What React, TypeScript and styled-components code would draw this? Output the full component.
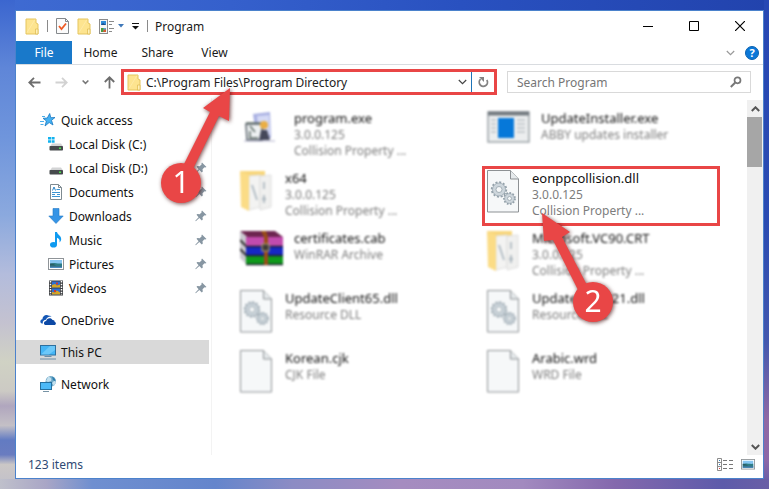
import React from "react";
import styled, { createGlobalStyle, css } from "styled-components";

const RED = "#e94646";

const GlobalStyle = createGlobalStyle`
  * { box-sizing: border-box; }
  body { margin: 0; }
  body, button, input { font-family: "Noto Sans", "Open Sans", sans-serif; font-size: 12px; }
  button { border: 0; padding: 0; background: none; color: inherit; }
  svg { display: block; flex: none; }
`;

const Desktop = styled.div`
  display: flex;
  min-height: 100vh;
  padding: 10px 5px 10px 15px;
  background:
    linear-gradient(90deg, #bfc0cb 0%, #a9a6c6 6%, #6f8fd0 12%, #6485cc 28%, #8c8cc4 38%, #a58cc0 52%, #a28abf 68%, #8468ad 80%, #5d5baa 94%, #6a5fa6 100%) bottom / 100% 10px no-repeat,
    linear-gradient(180deg, #3b66cf 0%, #5f86d8 14%, #6f95dc 28%, #8ba9de 44%, #b3bcdc 56%, #c4c2d0 66%, #d0d2c4 74%, #cccac4 80%, #b0a6be 83%, #c4c0c6 87%, #627bc2 90%, #6a7cc0 93%, #cbc7c6 95%, #c0bfcb 100%) left / 15px 100% no-repeat,
    linear-gradient(180deg, #2748b4 0%, #2a4bb2 45%, #4458ae 70%, #9069a4 86%, #8c68a8 94%, #5f5ba6 100%) right / 5px 100% no-repeat,
    linear-gradient(90deg, #3f6bd2 0%, #3560cc 30%, #2951c0 60%, #2243ad 100%);
`;

const Window = styled.main`
  flex: 1;
  min-width: 0;
  display: flex;
  flex-direction: column;
  background: #fff;
  border: 1px solid #4b82cc;
  color: #1a1a1a;
`;

const TitleBar = styled.header`
  display: flex;
  align-items: center;
  height: 30px;
  padding-left: 9px;
`;

const QuickTools = styled.div`
  display: flex;
  align-items: center;
  gap: 8px;
`;

const Divider = styled.span`
  width: 1px;
  height: 12px;
  background: #8a8a8a;
`;

const ToolButton = styled.button`
  display: flex;
  align-items: center;
  gap: 3px;
`;

const Title = styled.h1`
  flex: 1;
  margin: 0 0 0 7px;
  font-size: 12px;
  font-weight: 400;
`;

const CaptionButton = styled.button`
  display: flex;
  align-items: center;
  justify-content: center;
  width: 46px;
  height: 28px;
`;

const Ribbon = styled.nav`
  display: flex;
  align-items: stretch;
  height: 24px;
  border-bottom: 1px solid #d9dce0;
`;

const Tab = styled.button<{ $active?: boolean }>`
  width: ${(p) => (p.$active ? 56 : 57)}px;
  color: ${(p) => (p.$active ? "#fff" : "#1a1a1a")};
  background: ${(p) => (p.$active ? "#1979ca" : "transparent")};
`;

const RibbonEnd = styled.div`
  display: flex;
  align-items: center;
  gap: 10px;
  margin-left: auto;
  padding-right: 4px;
`;

const Help = styled.button`
  width: 14px;
  height: 14px;
  border-radius: 50%;
  border: 1px solid #0b62b0;
  background: #0b78d8;
  color: #fff;
  font-size: 11px;
  font-weight: 700;
  line-height: 12px;
`;

const NavBar = styled.div`
  display: flex;
  align-items: center;
  gap: 10px;
  height: 33px;
  padding: 1px 12px 0 12px;
`;

const Location = styled.div`
  display: flex;
  align-items: center;
  flex: 1;
`;

const NavButtons = styled.div`
  display: flex;
  align-items: center;
  width: 93px;
  justify-content: space-between;
  padding-right: 5px;
`;

const AddressBar = styled.div`
  position: relative;
  display: flex;
  align-items: stretch;
  flex: 1;
  height: 26px;
  border: 3px solid ${RED};
`;

const AddressField = styled.label`
  display: flex;
  align-items: center;
  flex: 1;
  gap: 5px;
  padding: 0 4px 0 3px;
  border-right: 1px solid #1e74b8;
`;

const TextInput = styled.input`
  flex: 1;
  min-width: 0;
  border: 0;
  padding: 0;
  outline: 0;
  background: none;
  color: #222;
  &::placeholder { color: #767676; opacity: 1; }
`;

const Refresh = styled.button`
  display: flex;
  align-items: center;
  justify-content: center;
  width: 22px;
`;

const SearchBox = styled.label`
  display: flex;
  align-items: center;
  width: 244px;
  height: 22px;
  padding: 0 8px 0 9px;
  border: 1px solid #d9d9d9;
`;

const Body = styled.div`
  display: flex;
  flex: 1;
`;

const Sidebar = styled.aside`
  width: 196px;
  padding: 10px 2px 0 0;
  border-right: 1px solid #f3f3f3;
`;

const SideGroup = styled.ul`
  list-style: none;
  margin: 0 0 8px;
  padding: 0;
`;

const SideLink = styled.a<{ $nested?: boolean; $selected?: boolean }>`
  display: flex;
  align-items: center;
  gap: 5px;
  height: 24px;
  padding: 0 2px 0 ${(p) => (p.$nested ? 32 : 24)}px;
  background: ${(p) => (p.$selected ? "#d9d9d9" : "transparent")};
  color: #111;
  text-decoration: none;
`;

const SideLabel = styled.span`
  flex: 1;
`;

const FileGrid = styled.ul`
  flex: 1;
  display: grid;
  grid-template-columns: 1fr 1fr;
  grid-auto-rows: 60px;
  align-content: start;
  column-gap: 9px;
  list-style: none;
  margin: 0;
  padding: 8px 27px 0 23px;
`;

const FileItem = styled.li<{ $focus?: boolean }>`
  position: relative;
  display: flex;
  padding: 0 2px;
  border: 3px solid transparent;
  ${(p) =>
    p.$focus
      ? css`
          border-color: ${RED};
          z-index: 1;
        `
      : css`
          filter: blur(1px);
        `}
`;

const FileIcon = styled.div<{ $wide?: boolean }>`
  flex: none;
  width: ${(p) => (p.$wide ? 54 : 45)}px;
  padding-top: 1px;
`;

const FileText = styled.div`
  color: #7d7d7d;
  line-height: 16px;
  white-space: nowrap;
`;

const FileName = styled.div`
  color: #111;
  font-size: 13px;
  line-height: 18px;
`;

const ScrollBar = styled.div`
  display: flex;
  flex-direction: column;
  width: 16px;
  margin-top: 2px;
  background: #f0f0f0;
`;

const ScrollButton = styled.button`
  display: flex;
  align-items: center;
  justify-content: center;
  height: 17px;
`;

const ScrollThumb = styled.div`
  height: 50px;
  margin-right: 1px;
  background: #a6a6a6;
`;

const ScrollTrack = styled.div`
  flex: 1;
`;

const StatusBar = styled.footer`
  display: flex;
  align-items: center;
  gap: 7px;
  height: 23px;
  padding: 0 8px 4px 12px;
  color: #2f4a74;
`;

const StatusText = styled.span`
  flex: 1;
`;

const Callout = styled.div<{ $left: number; $top: number }>`
  position: absolute;
  z-index: 3;
  left: ${(p) => p.$left}px;
  top: ${(p) => p.$top}px;
  pointer-events: none;
  filter: drop-shadow(1px 1px 2px rgba(60, 0, 0, 0.7));
`;

const Badge = styled.span<{ $left: number; $top: number }>`
  position: absolute;
  left: ${(p) => p.$left}px;
  top: ${(p) => p.$top}px;
  display: flex;
  align-items: center;
  justify-content: center;
  width: 40px;
  height: 40px;
  border-radius: 50%;
  background: ${RED};
  color: #fff;
  font-size: 30px;
  line-height: 38px;
  padding-bottom: 2px;
`;

/* ---------- icons ---------- */

const Folder = () => (
  <svg width="14" height="17" viewBox="0 0 14 17">
    <path d="M1 1h10v4l2 1v10H1z" fill="#fde48f" stroke="#e5c55e" />
    <path d="M10.500 11v5h2.500v-5z" fill="#fff0b8" stroke="#dcb94c" strokeWidth=".7" />
    <path d="M2 14.500l8-13" stroke="#ffefb5" opacity=".6" />
  </svg>
);

const CheckDoc = () => (
  <svg width="13" height="16" viewBox="0 0 13 16">
    <path d="M.5.5h9l3 3v12H.5z" fill="#fbfbfb" stroke="#85898c" />
    <path d="M9.500.5v3h3" fill="none" stroke="#85898c" />
    <path d="M3 8l2.500 3L10 5.500" fill="none" stroke="#ee5a24" strokeWidth="1.800" />
  </svg>
);

const ViewOptions = () => (
  <svg width="16" height="15" viewBox="0 0 16 15">
    <rect x=".5" y=".5" width="8" height="14" fill="#f5f5f5" stroke="#8b8b8b" />
    <rect x="2" y="2" width="5" height="4" fill="#2d8ad8" />
    <path d="M2 6l2-2 3 2z" fill="#1b4d8c" />
    <rect x="2" y="9" width="5" height="4" fill="#58a5d8" />
    <path d="M2 9h2.500v4H2z" fill="#4a9c3e" />
    <path d="M5 10.500h2V13H4z" fill="#d65b2e" />
    <path d="M10 2.500h5M10 5.500h3M10 9.500h5M10 12.500h3" stroke="#8b8b8b" />
  </svg>
);

const BlueCaret = () => (
  <svg width="6" height="4" viewBox="0 0 6 4"><path d="M0 0h6L3 3.500z" fill="#3f78b9" /></svg>
);

const Customize = () => (
  <svg width="7" height="7" viewBox="0 0 7 7"><path d="M0 .5h7" stroke="#111" /><path d="M0 3h7L3.500 6.500z" fill="#111" /></svg>
);

const Chevron = ({ w = 9, color = "#555", up = false, bold = false }: { w?: number; color?: string; up?: boolean; bold?: boolean }) => (
  <svg width={w} height="6" viewBox="0 0 9 6">
    <path d={up ? "M.8 5L4.500 1.300 8.200 5" : "M.8 1L4.500 4.700 8.200 1"} fill="none" stroke={color} strokeWidth={bold ? 2 : 1.200} />
  </svg>
);

const Arrow = ({ color, turn }: { color: string; turn: number }) => (
  <svg width="13" height="13" viewBox="0 0 13 13">
    <path d="M12.500 6.500H1.500M6 1.800L1.300 6.500 6 11.200" transform={`rotate(${turn} 6.500 6.500)`} fill="none" stroke={color} strokeWidth="1.800" />
  </svg>
);

const RefreshIcon = () => (
  <svg width="11" height="12" viewBox="0 0 11 12">
    <path d="M2.600 3.200A4.100 4.100 0 1 0 8.800 4" fill="none" stroke="#828282" strokeWidth="1.800" />
    <path d="M1 1h5v5z" fill="#828282" />
  </svg>
);

const SearchIcon = () => (
  <svg width="12" height="12" viewBox="0 0 12 12">
    <circle cx="7.500" cy="4.300" r="3" fill="none" stroke="#777" strokeWidth="1.700" />
    <path d="M5.300 6.500L.8 11" stroke="#777" strokeWidth="2" />
  </svg>
);

const Star = () => (
  <svg width="16" height="16" viewBox="0 0 16 16">
    <path d="M9.700 1.500l1.100 4.200 4.200-.2-3.500 2.800 1.500 4.700-3.800-2.500-4.200 3.500 1.400-5L3 6.300l4.300-.3z" fill="#45b1f2" stroke="#1a78c2" strokeWidth=".8" />
    <path d="M2 4.500h3M0 9.500h4M.5 12.500h3" stroke="#4aaeea" />
  </svg>
);

const Disk = ({ system }: { system?: boolean }) => (
  <svg width="16" height="16" viewBox="0 0 16 16">
    {system && <path d="M0 1h3v2.500H0zM3.600 1h3v2.500h-3zM0 4.200h3v2.500H0zM3.600 4.200h3v2.500h-3z" fill="#12b2ef" />}
    <path d="M4 7.500h9l2 3H2z" fill="#d3d4d5" />
    <rect x="1.500" y="10" width="13.500" height="4.500" rx=".8" fill="#464a4d" />
    <rect x="11" y="11.500" width="2" height="1.500" fill="#4be04b" />
  </svg>
);

const DocIcon = () => (
  <svg width="16" height="16" viewBox="0 0 16 16">
    <path d="M2.500.5h8l3 3v12h-11z" fill="#fff" stroke="#7e8a91" />
    <path d="M10.500.5v3h3" fill="none" stroke="#7e8a91" />
    <path d="M4.500 6.500L6 3l1.500 3.500" fill="none" stroke="#2883c8" />
    <path d="M8.500 5.500H12M4 8.500h8M4 10.500h3M9 10.500h3M4 12.500h8" stroke="#3b93d2" />
  </svg>
);

const Download = () => (
  <svg width="16" height="16" viewBox="0 0 16 16">
    <path d="M5 .5h6V8h4.200L8 15.500.8 8H5z" fill="#3594e6" stroke="#2279c6" strokeWidth=".6" />
  </svg>
);

const Note = () => (
  <svg width="16" height="16" viewBox="0 0 16 16">
    <ellipse cx="5.500" cy="12.700" rx="3.500" ry="2.800" fill="#0f9af0" />
    <path d="M7 0h2c.4 3 4.200 3.500 4.200 7 0 1.500-.8 2.700-1.700 3.500.6-2.500-.4-4-2.500-4.700v7H7z" fill="#0f9af0" />
  </svg>
);

const Picture = ({ w = 16 }: { w?: number }) => (
  <svg width={w} height={w * 0.75} viewBox="0 0 16 12">
    <rect x=".5" y=".5" width="15" height="11" fill="#fff" stroke="#8f9498" />
    <rect x="2" y="2" width="12" height="8" fill="#86c5f1" />
    <path d="M2 6c3-2 6 0 12-.5V8H2z" fill="#2d7d86" />
    <path d="M2 5.500c2-.5 5 1 6 2H2zM2 8h12v2H2z" fill="#2a5b62" />
    <path d="M2 8.500h12V10H2z" fill="#4a8cc0" />
  </svg>
);

const Film = () => (
  <svg width="16" height="16" viewBox="0 0 16 16">
    <rect x="1" y=".5" width="14" height="15" fill="#3b3d41" />
    <rect x="4" y="1.500" width="8" height="6" fill="#2f6fd4" />
    <rect x="4" y="8.500" width="8" height="6" fill="#2f6fd4" />
    <path d="M4 7.500V5l3-1 2 1.500 3-1v3zM4 14.500V12l3 .5 2-2 3 2v2z" fill="#d9a520" />
    <path d="M8 2.500h2v2H8zM6 10h2v2H6z" fill="#d13b2b" />
    <path d="M2.500 1v14M13.500 1v14" stroke="#fff" strokeWidth="1.500" strokeDasharray="1.500 1.200" />
  </svg>
);

const Cloud = () => (
  <svg width="16" height="12" viewBox="0 0 16 12">
    <path d="M2 9.500C-.5 8.800 0 5.500 2.400 5.200 2.500 2 6-.3 9 1.800c1-.3 2 0 2.600.8C8.500 2.300 6.500 3.800 6 5.800 3.500 6 2.400 7.500 2.900 9.500z" fill="#1457b5" />
    <path d="M6 11C3.300 11 3.200 7.300 6.200 7 6.500 3.800 11.300 3 12.500 6c2-.2 2.300 1.300 2 1.800 2 .5 1.800 3.200-.3 3.200z" fill="#0c49a5" />
  </svg>
);

const Monitor = () => (
  <svg width="16" height="16" viewBox="0 0 16 16">
    <rect x=".5" y="1.500" width="15" height="9.500" fill="#45b5f5" stroke="#2d6f9e" />
    <path d="M1 10.500L10 2h5v4l-6 4.500z" fill="#7dd0fb" opacity=".7" />
    <path d="M4.500 12.500h7M0 15h16" stroke="#6b8da6" />
  </svg>
);

const NetworkIcon = () => (
  <svg width="16" height="16" viewBox="0 0 16 16">
    <circle cx="10.800" cy="5.200" r="5.200" fill="#6fa9c8" />
    <path d="M8 1c3 0 4 2 3 4l-3 1-2-1zM12 7l3-3 1 2-2 4z" fill="#c3e0ee" />
    <path d="M12 .5c2.500 1 3.500 3 3.500 5L13 4z" fill="#2f7fae" />
    <rect x=".5" y="6.500" width="11" height="7" fill="#4cb9f7" stroke="#25709f" />
    <path d="M3 15.500h6" stroke="#7793a5" />
  </svg>
);

const Pin = () => (
  <svg width="12" height="12" viewBox="0 0 12 12">
    <path d="M7 .5L11.500 5l-1.300.6-.7-.3-2 2 .3 2.200-1 .9-2.500-2.500L.8 11.200l-.5-.4 3.300-3.600L1.500 4.800l.9-.9 2.300.3 2-2-.3-.7z" fill="#8796a2" />
  </svg>
);

const Page = ({ gears }: { gears?: boolean }) => (
  <svg width="33" height="43" viewBox="0 0 33 43">
    <path d="M.5.5h23l8 8.500v33H.5z" fill="#f6f8f9" stroke="#8d9194" />
    <path d="M23.500.5V9h8" fill="#e6eaec" stroke="#8d9194" />
    {gears && (
      <g fill="none" stroke="#93a1aa">
        <circle cx="12" cy="19.500" r="7.200" strokeWidth="2" strokeDasharray="2 1.770" />
        <circle cx="12" cy="19.500" r="4.800" stroke="#cdd6dc" strokeWidth="3.500" />
        <circle cx="12" cy="19.500" r="6.500" strokeWidth=".7" />
        <circle cx="12" cy="19.500" r="3" strokeWidth=".8" />
        <circle cx="22.500" cy="28.500" r="5.500" strokeWidth="1.800" strokeDasharray="1.700 1.440" />
        <circle cx="22.500" cy="28.500" r="3.500" stroke="#cdd6dc" strokeWidth="2.600" />
        <circle cx="22.500" cy="28.500" r="4.900" strokeWidth=".7" />
        <circle cx="22.500" cy="28.500" r="2" strokeWidth=".8" />
      </g>
    )}
  </svg>
);

const OpenFolder = () => (
  <svg width="33" height="43" viewBox="0 0 33 43">
    <path d="M0 1h25v5H0z" fill="#f8d67b" />
    <path d="M9 6l11-1v32L9 40z" fill="#f3f3f2" stroke="#dedede" />
    <path d="M20 6l11-1v32l-11 3z" fill="#f0f0ef" stroke="#dedede" />
    <path d="M0 1l9 4v36L1 37z" fill="#fbdc86" />
    <path d="M12 15l2 6 3 9M24 12v7M24 25v8M22 29h4" stroke="#a3b0b9" fill="none" strokeWidth="1.500" />
  </svg>
);

const Installer = () => (
  <svg width="40" height="43" viewBox="0 0 40 43">
    <path d="M13 4l17-2 1 26-14 3z" fill="#a9b0e2" />
    <path d="M17 6l12-1 1 20-11 3z" fill="#d5daf6" />
    <path d="M6 14h16v16H7z" fill="#eef1f2" stroke="#59626a" strokeWidth="1.500" />
    <path d="M10 16l5 6M10 21v7h8M6 13h15" stroke="#5d6b66" strokeWidth="1.500" fill="none" />
    <circle cx="24" cy="15" r="4" fill="#eaae45" />
    <path d="M21 20h6l3 10H19z" fill="#45485a" />
    <path d="M4 31h31" stroke="#9b9bbd" strokeWidth="2" opacity=".4" />
  </svg>
);

const AppWindow = () => (
  <svg width="43" height="43" viewBox="0 0 43 43">
    <rect x="1" y="2" width="41" height="30" fill="#eceeef" stroke="#9da4a9" strokeWidth="1.500" />
    <path d="M1 3.500h41" stroke="#737a80" strokeWidth="4" />
    <path d="M4 10h5M4 14h5M4 18h5M4 22h5M30 10h8M30 14h8M30 18h8M30 22h8" stroke="#bcc2c6" strokeWidth="1.500" />
    <rect x="11" y="8" width="16" height="20" fill="#0678d9" />
  </svg>
);

const Archive = () => (
  <svg width="43" height="43" viewBox="0 0 43 43">
    <path d="M0 1h35l8 6H7z" fill="#6d2550" />
    <path d="M0 1l7 6v28l-7-7z" fill="#c9c7cf" />
    <path d="M0 10l7 7M0 19l7 7" stroke="#333" strokeWidth="2" />
    <rect x="6" y="7" width="37" height="9" fill="#c24bae" />
    <rect x="6" y="16" width="37" height="10" fill="#1628c4" />
    <rect x="6" y="26" width="37" height="9" fill="#0f9a1b" />
    <path d="M6 16.500h37M6 25.500h37M6 34.500h37" stroke="#222034" strokeWidth="1.500" />
    <path d="M21 1h5l2 6v28h-4V7z" fill="#9a4d18" />
    <rect x="22" y="14" width="7" height="7" fill="#3d3a35" stroke="#b8a77a" />
  </svg>
);

const ListView = () => (
  <svg width="17" height="13" viewBox="0 0 17 13">
    <path d="M.5.5h4v12h-4zM.5 4.500h4M.5 8.500h4" fill="#fff" stroke="#8b8b8b" />
    <path d="M2 2.500h1M2 6.500h1" stroke="#2f7fc1" />
    <path d="M2 10.500h1" stroke="#d44" />
    <path d="M6 2.500h4M12 2.500h4M6 6.500h4M12 6.500h4M6 10.500h4M12 10.500h4" stroke="#777" />
  </svg>
);

/* ---------- data ---------- */

type Side = { label: string; icon: React.ReactNode; nested?: boolean; pinned?: boolean; selected?: boolean };

const sideGroups: Side[][] = [
  [
    { label: "Quick access", icon: <Star /> },
    { label: "Local Disk (C:)", icon: <Disk system />, nested: true },
    { label: "Local Disk (D:)", icon: <Disk />, nested: true, pinned: true },
    { label: "Documents", icon: <DocIcon />, nested: true, pinned: true },
    { label: "Downloads", icon: <Download />, nested: true, pinned: true },
    { label: "Music", icon: <Note />, nested: true, pinned: true },
    { label: "Pictures", icon: <Picture />, nested: true, pinned: true },
    { label: "Videos", icon: <Film />, nested: true, pinned: true },
  ],
  [{ label: "OneDrive", icon: <Cloud /> }],
  [{ label: "This PC", icon: <Monitor />, selected: true }],
  [{ label: "Network", icon: <NetworkIcon /> }],
];

type FileEntry = { name: string; lines: string[]; icon: React.ReactNode; wide?: boolean; focus?: boolean };

const files: FileEntry[] = [
  { name: "program.exe", lines: ["3.0.0.125", "Collision Property ..."], icon: <Installer />, wide: true },
  { name: "UpdateInstaller.exe", lines: ["ABBY updates installer"], icon: <AppWindow />, wide: true },
  { name: "x64", lines: ["3.0.0.125", "Collision Property ..."], icon: <OpenFolder /> },
  { name: "eonppcollision.dll", lines: ["3.0.0.125", "Collision Property ..."], icon: <Page gears />, focus: true },
  { name: "certificates.cab", lines: ["WinRAR Archive"], icon: <Archive />, wide: true },
  { name: "Microsoft.VC90.CRT", lines: ["3.0.0.125", "Collision Property ..."], icon: <OpenFolder /> },
  { name: "UpdateClient65.dll", lines: ["Resource DLL"], icon: <Page gears /> },
  { name: "UpdateClient21.dll", lines: ["Resource DLL"], icon: <Page gears /> },
  { name: "Korean.cjk", lines: ["CJK File"], icon: <Page /> },
  { name: "Arabic.wrd", lines: ["WRD File"], icon: <Page /> },
];

export default function App() {
  return (
    <Desktop>
      <GlobalStyle />
      <Window>
        <TitleBar>
          <QuickTools>
            <Folder />
            <Divider />
            <ToolButton aria-label="Properties"><CheckDoc /></ToolButton>
            <ToolButton aria-label="New folder"><Folder /></ToolButton>
            <ToolButton aria-label="View options"><ViewOptions /><BlueCaret /></ToolButton>
            <ToolButton aria-label="Customize toolbar"><Customize /></ToolButton>
            <Divider />
          </QuickTools>
          <Title>Program</Title>
          <CaptionButton aria-label="Minimize">
            <svg width="10" height="10" viewBox="0 0 10 10"><path d="M0 5.500h10" stroke="#000" /></svg>
          </CaptionButton>
          <CaptionButton aria-label="Maximize">
            <svg width="10" height="10" viewBox="0 0 10 10"><path d="M.5.5h9v9h-9z" fill="none" stroke="#000" /></svg>
          </CaptionButton>
          <CaptionButton aria-label="Close">
            <svg width="10" height="10" viewBox="0 0 10 10"><path d="M0 0l10 10M10 0L0 10" stroke="#000" strokeWidth="1.200" /></svg>
          </CaptionButton>
        </TitleBar>

        <Ribbon>
          <Tab $active>File</Tab>
          <Tab>Home</Tab>
          <Tab>Share</Tab>
          <Tab>View</Tab>
          <RibbonEnd>
            <ToolButton aria-label="Expand ribbon"><Chevron color="#999" /></ToolButton>
            <Help aria-label="Help">?</Help>
          </RibbonEnd>
        </Ribbon>

        <NavBar>
          <Location>
            <NavButtons>
              <ToolButton aria-label="Back"><Arrow color="#6d6d6d" turn={0} /></ToolButton>
              <ToolButton aria-label="Forward"><Arrow color="#d2d2d2" turn={180} /></ToolButton>
              <ToolButton aria-label="Recent"><Chevron w={7} color="#777" bold /></ToolButton>
              <ToolButton aria-label="Up"><Arrow color="#6d6d6d" turn={90} /></ToolButton>
            </NavButtons>
            <AddressBar>
              <AddressField>
                <Folder />
                <TextInput aria-label="Address" defaultValue={"C:\\Program Files\\Program Directory"} />
                <Chevron color="#444" />
              </AddressField>
              <Refresh aria-label="Refresh"><RefreshIcon /></Refresh>
              <Callout $left={37} $top={16}>
                <svg width="72" height="118" viewBox="0 0 72 118">
                  <path d="M69 0L42 20l7 4L22 78l9 5L58 28l10 5z" fill={RED} />
                </svg>
                <Badge $left={0} $top={75}>1</Badge>
              </Callout>
            </AddressBar>
          </Location>
          <SearchBox>
            <TextInput type="search" aria-label="Search" placeholder="Search Program" />
            <SearchIcon />
          </SearchBox>
        </NavBar>

        <Body>
          <Sidebar>
            {sideGroups.map((group, i) => (
              <SideGroup key={i}>
                {group.map((s) => (
                  <li key={s.label}>
                    <SideLink href="#" $nested={s.nested} $selected={s.selected}>
                      {s.icon}
                      <SideLabel>{s.label}</SideLabel>
                      {s.pinned && <Pin />}
                    </SideLink>
                  </li>
                ))}
              </SideGroup>
            ))}
          </Sidebar>

          <FileGrid>
            {files.map((f) => (
              <FileItem key={f.name} $focus={f.focus}>
                <FileIcon $wide={f.wide}>{f.icon}</FileIcon>
                <FileText>
                  <FileName>{f.name}</FileName>
                  {f.lines.map((l) => (
                    <div key={l}>{l}</div>
                  ))}
                </FileText>
                {f.focus && (
                  <Callout $left={57} $top={43}>
                    <svg width="54" height="112" viewBox="0 0 54 112">
                      <path d="M0 1L28 20l-8 5 27 52-9 5L11 28l-9 1z" fill={RED} />
                    </svg>
                    <Badge $left={31} $top={70}>2</Badge>
                  </Callout>
                )}
              </FileItem>
            ))}
          </FileGrid>

          <ScrollBar>
            <ScrollButton aria-label="Scroll up"><Chevron up color="#555" bold /></ScrollButton>
            <ScrollThumb />
            <ScrollTrack />
            <ScrollButton aria-label="Scroll down"><Chevron color="#555" bold /></ScrollButton>
          </ScrollBar>
        </Body>

        <StatusBar>
          <StatusText>123 items</StatusText>
          <ToolButton aria-label="Details"><ListView /></ToolButton>
          <ToolButton aria-label="Large icons"><Picture w={14} /></ToolButton>
        </StatusBar>
      </Window>
    </Desktop>
  );
}
